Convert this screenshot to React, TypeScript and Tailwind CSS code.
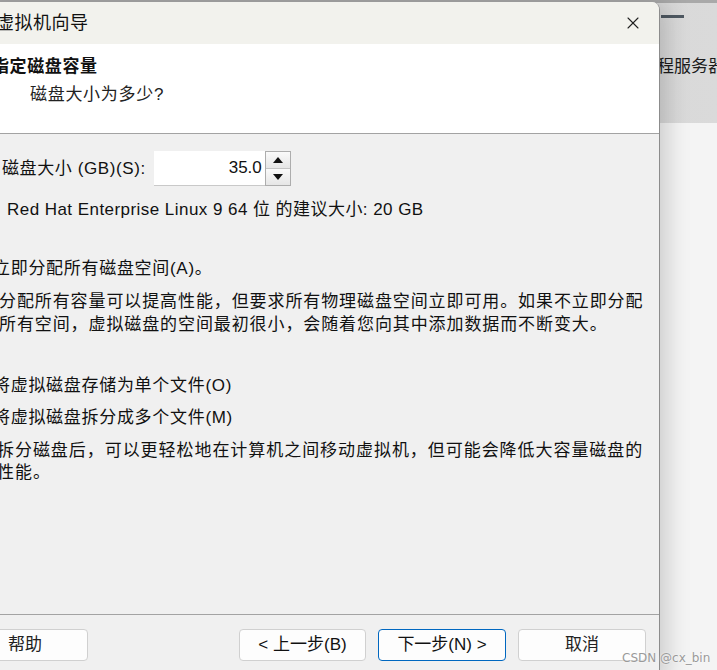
import { X } from "lucide-react";

const App = () => {
  const font = "font-['Liberation_Sans','Noto_Sans_CJK_SC',sans-serif]";

  return (
    <div className={`relative w-[717px] h-[670px] overflow-hidden bg-[#f4f4f4] text-[#111] ${font}`}>
      {/* window behind the wizard */}
      <div className="absolute inset-x-0 top-0 h-[123px] bg-gradient-to-r from-[#cfcfcf] to-[#dadada]">
        <div className="h-[3px] bg-[#a9a9a9]" />
        <div className="ml-[661px] mt-[12px] h-[3px] w-[23px] bg-[#4f5962]" />
        <div className="ml-[640px] mt-[38px] whitespace-nowrap text-[17px] leading-[22px] text-[#1c1c1c]">远程服务器</div>
      </div>

      {/* wizard dialog */}
      <div className="absolute left-[-20px] top-[2px] w-[680px] h-[680px] flex flex-col bg-[#f0f0f0] rounded-tr-[8px] border-r border-[#8c8c8c] shadow-[6px_0_24px_rgba(0,0,0,0.18)] overflow-hidden">
        <div className="h-[42px] shrink-0 flex items-center justify-between bg-[#f2f2ed] pl-[16px] pr-[16px]">
          <span className="text-[18px] tracking-[0.5px]">虚拟机向导</span>
          <X className="w-[20px] h-[20px] text-[#222]" strokeWidth={1.3} />
        </div>

        <div className="h-[90px] shrink-0 bg-white border-b border-[#a3a3a3] pl-[12px] pt-[12px]">
          <div className="text-[17px] leading-[22px] font-bold tracking-[0.6px]">指定磁盘容量</div>
          <div className="pl-[38px] mt-[6px] text-[17px] leading-[22px] tracking-[0.7px] text-[#222]">磁盘大小为多少?</div>
        </div>

        <div className="flex-1 flex flex-col pt-[17px] text-[17px] leading-[22px]">
          <div className="flex items-center pl-[22px]">
            <span className="tracking-[0.6px]">磁盘大小 (GB)(S):</span>
            <div className="ml-[8px] flex h-[35px]">
              <div className="w-[111px] bg-white border-b border-[#c9c9c9] flex items-center justify-end pr-[3px] text-[17px]">35.0</div>
              <div className="w-[26px] flex flex-col border border-[#adadad] bg-[#f3f3f3]">
                <div className="flex-1 flex items-center justify-center border-b border-[#c4c4c4] bg-gradient-to-b from-[#fafafa] to-[#e6e6e6]">
                  <svg width="10" height="6" viewBox="0 0 10 6"><path d="M5 0 L10 6 L0 6 Z" fill="#111" /></svg>
                </div>
                <div className="flex-1 flex items-center justify-center bg-gradient-to-b from-[#fafafa] to-[#e6e6e6]">
                  <svg width="10" height="6" viewBox="0 0 10 6"><path d="M0 0 L10 0 L5 6 Z" fill="#111" /></svg>
                </div>
              </div>
            </div>
          </div>

          <div className="pl-[27px] mt-[13px] tracking-[0.45px]">Red Hat Enterprise Linux 9 64 位 的建议大小: 20 GB</div>

          <label className="flex items-center gap-[8px] ml-[-8px] mt-[37px]">
            <span className="w-[13px] h-[13px] rounded-full border border-[#333] bg-white" />
            <span className="tracking-[0.7px]">立即分配所有磁盘空间(A)。</span>
          </label>
          <div className="pl-[19px] mt-[10px] leading-[23px] tracking-[0.9px]">
            分配所有容量可以提高性能，但要求所有物理磁盘空间立即可用。如果不立即分配
            <br />
            所有空间，虚拟磁盘的空间最初很小，会随着您向其中添加数据而不断变大。
          </div>

          <label className="flex items-center gap-[8px] ml-[-8px] mt-[39px]">
            <span className="w-[13px] h-[13px] rounded-full border border-[#333] bg-white" />
            <span className="tracking-[0.7px]">将虚拟磁盘存储为单个文件(O)</span>
          </label>
          <label className="flex items-center gap-[8px] ml-[-8px] mt-[10px]">
            <span className="w-[13px] h-[13px] rounded-full border border-[#333] bg-white flex items-center justify-center">
              <span className="w-[7px] h-[7px] rounded-full bg-[#111]" />
            </span>
            <span className="tracking-[0.7px]">将虚拟磁盘拆分成多个文件(M)</span>
          </label>
          <div className="pl-[17px] mt-[11px] tracking-[0.95px]">
            拆分磁盘后，可以更轻松地在计算机之间移动虚拟机，但可能会降低大容量磁盘的
            <br />
            性能。
          </div>
        </div>

        <div className="h-[68px] shrink-0 border-t border-[#a3a3a3] flex items-start pt-[14px] text-[17px]">
          <button className="ml-[-18px] w-[126px] h-[32px] bg-[#fdfdfd] border border-[#d0d0d0] rounded-[4px] text-[#222]">帮助</button>
          <div className="flex-1" />
          <button className="w-[127px] h-[32px] bg-[#fdfdfd] border border-[#d0d0d0] rounded-[4px] text-[#111]">&lt; 上一步(B)</button>
          <button className="ml-[12px] w-[128px] h-[32px] bg-[#fdfdfd] border border-[#0067c0] rounded-[4px] text-[#111]">下一步(N) &gt;</button>
          <button className="ml-[12px] mr-[13px] w-[128px] h-[32px] bg-[#fdfdfd] border border-[#d0d0d0] rounded-[4px] text-[#222]">取消</button>
        </div>
      </div>

      <div className="absolute left-[622px] top-[650px] text-[12px] leading-[16px] text-[#9a9a9a] [text-shadow:0_0_2px_#fff] font-['DejaVu_Sans',sans-serif]">
        CSDN @cx_bin
      </div>
    </div>
  );
};

export default App;
